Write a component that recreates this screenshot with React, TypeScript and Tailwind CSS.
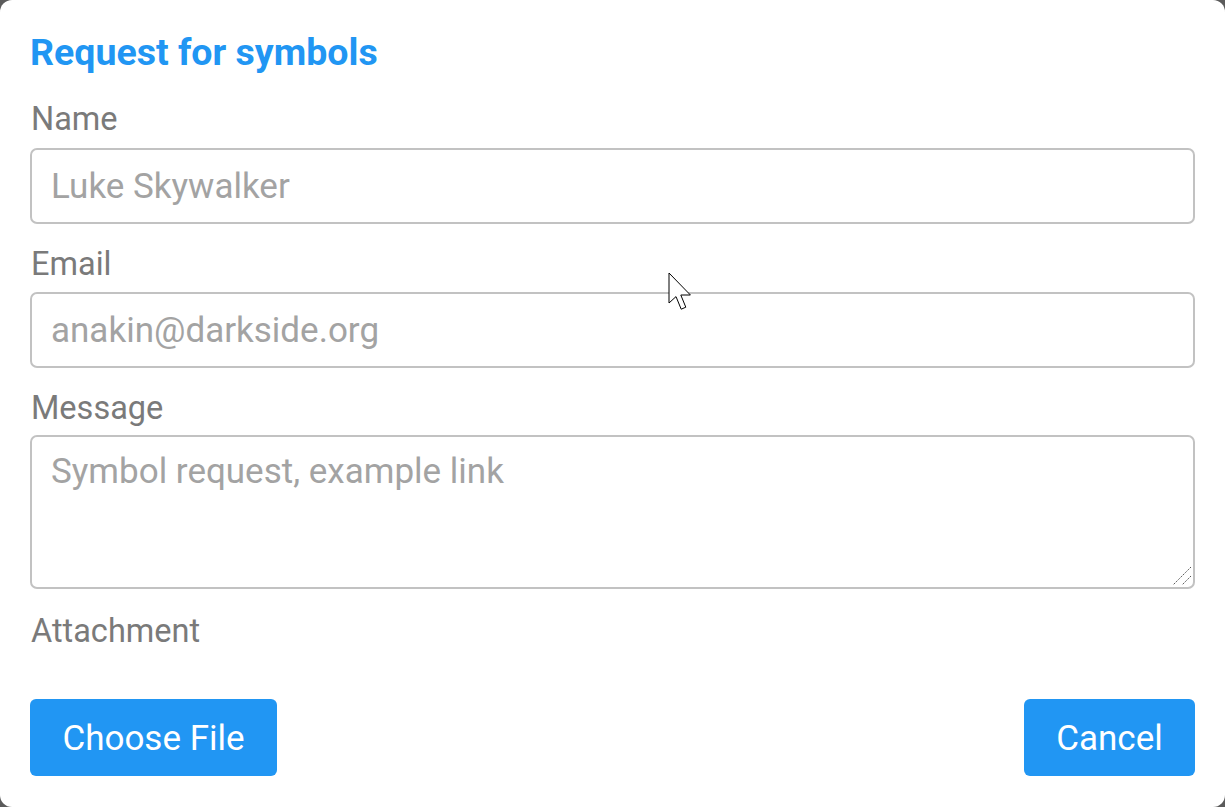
import React from 'react';

const font = { fontFamily: 'Roboto, "Noto Sans", sans-serif' };

// Outline only – the picture holds a mouse pointer over the form
const Pointer = () => (
  <svg
    className="pointer-events-none absolute left-[668px] top-[272px]"
    width="27"
    height="40"
    viewBox="0 0 13.5 20"
  >
    <path
      d="M0.5 0.5 L0.5 15.5 L4 12.3 L6.6 18.6 L8.9 17.6 L6.4 11.5 L11.2 11.5 Z"
      fill="#fff"
      stroke="#000"
      strokeWidth="0.5"
      strokeLinejoin="miter"
    />
  </svg>
);

const Label = ({ children, className = '' }: { children: React.ReactNode; className?: string }) => (
  <label className={`block text-[32.5px] leading-[40px] text-[#7a7a7a] ${className}`}>{children}</label>
);

export default function App() {
  return (
    <div className="h-screen w-screen bg-[#5b5b5b]" style={font}>
      <div className="relative flex h-full w-full flex-col rounded-[12px] bg-white px-[30px]">
        <h2 className="mt-[32px] text-[37.5px] font-bold leading-[40px] text-[#2196f3]">Request for symbols</h2>

        <Label className="mt-[27px] pl-px">Name</Label>
        <input
          className="mt-[9px] h-[76px] w-full rounded-[7px] border-2 border-[#c2c2c2] px-[19px] text-[35px] text-[#424242] outline-none placeholder:text-[#a3a3a3]"
          placeholder="Luke Skywalker"
        />

        <Label className="mt-[20px] pl-px">Email</Label>
        <input
          className="mt-[8px] h-[76px] w-full rounded-[7px] border-2 border-[#c2c2c2] px-[19px] text-[35px] text-[#424242] outline-none placeholder:text-[#a3a3a3]"
          placeholder="anakin@darkside.org"
        />

        <Label className="mt-[20px] pl-px">Message</Label>
        <div className="relative mt-[7px]">
          <textarea
            className="block h-[154px] w-full resize-none rounded-[7px] border-2 border-[#c2c2c2] px-[19px] pt-[13px] text-[35px] leading-[44px] text-[#424242] outline-none placeholder:text-[#a3a3a3]"
            placeholder="Symbol request, example link"
          />
          {/* resize grip */}
          <svg className="pointer-events-none absolute bottom-[3px] right-[3px]" width="20" height="20" viewBox="0 0 20 20">
            <path d="M19 1 L1 19 M19 10 L10 19" stroke="#555" strokeWidth="1" strokeDasharray="1.5 1" />
          </svg>
        </div>

        <Label className="mt-[22px] pl-px">Attachment</Label>

        <div className="mt-[48px] flex items-center justify-between">
          <button className="h-[77px] w-[247px] rounded-[6px] bg-[#2196f3] pt-[3px] text-[35px] text-white">
            Choose File
          </button>
          <button className="h-[77px] w-[171px] rounded-[6px] bg-[#2196f3] pt-[3px] text-[35px] text-white">
            Cancel
          </button>
        </div>

        <Pointer />
      </div>
    </div>
  );
}
